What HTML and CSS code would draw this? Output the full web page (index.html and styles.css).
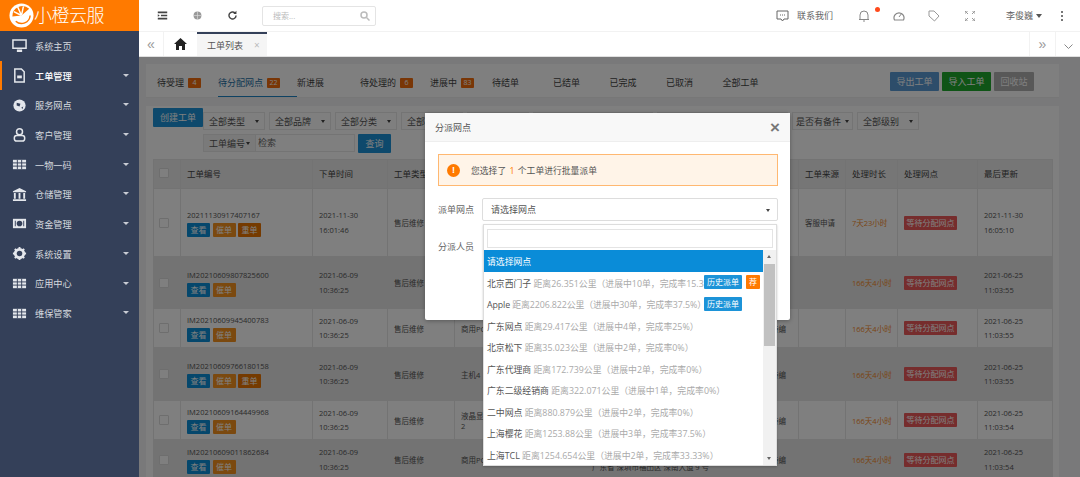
FILE: index.html
```html
<!DOCTYPE html>
<html>
<head>
  <meta charset="utf-8">
  <title>工单列表</title>
  <link rel="stylesheet" href="styles.css">
</head>
<body>
  <div class="app">
    <aside class="sidebar">
      <div class="logo">
        <svg class="logo-mark" width="25" height="25" viewBox="0 0 26 26"><circle cx="13" cy="13" r="12.500" fill="#fff"/><path d="M13 13 L21 6 A10.500 10.500 0 0 0 3.500 14 Z" fill="#ff7a00"/><path d="M13 13 L5 9 M13 13 L9 4 M13 13 L15 3.500" stroke="#fff" stroke-width="1.500"/><path d="M7 19 A9 9 0 0 0 22 13" fill="none" stroke="#ff7a00" stroke-width="1.500"/></svg>
        <span class="logo-text">小橙云服</span>
      </div>
      <nav class="menu">
        <a class="menu-item">
          <svg class="menu-icon" viewBox="0 0 16 16"><path d="M1 2h14v9H1z M6 13h4v1H6z" fill="none" stroke="#e4e7ec" stroke-width="1.600"/></svg>
          <span>系统主页</span>
        </a>
        <a class="menu-item active">
          <svg class="menu-icon" viewBox="0 0 16 16"><path d="M3 1h7l3 3v11H3z" fill="none" stroke="#e4e7ec" stroke-width="1.600"/><path d="M5.500 8h5v3h-5z" fill="#e4e7ec"/></svg>
          <span>工单管理</span><i class="caret"></i>
        </a>
        <a class="menu-item">
          <svg class="menu-icon" viewBox="0 0 16 16"><circle cx="8" cy="8" r="6.500" fill="#e4e7ec"/><path d="M5 5l4 1-1 3-3-1z M10 10l2-1-1 3z" fill="#344059"/></svg>
          <span>服务网点</span><i class="caret"></i>
        </a>
        <a class="menu-item">
          <svg class="menu-icon" viewBox="0 0 16 16"><circle cx="8" cy="5" r="3.200" fill="none" stroke="#e4e7ec" stroke-width="1.600"/><rect x="2.500" y="9" width="11" height="6" rx="2.500" fill="none" stroke="#e4e7ec" stroke-width="1.600"/></svg>
          <span>客户管理</span><i class="caret"></i>
        </a>
        <a class="menu-item">
          <svg class="menu-icon" viewBox="0 0 16 16"><path d="M1 3h14v10H1z" fill="#e4e7ec"/><path d="M1 6.300h14M1 9.700h14M5.700 3v10M10.300 3v10" stroke="#344059"/></svg>
          <span>一物一码</span><i class="caret"></i>
        </a>
        <a class="menu-item">
          <svg class="menu-icon" viewBox="0 0 16 16"><path d="M8 1l7 3.500v1H1v-1z M2 6.500h2v6H2z M7 6.500h2v6H7z M12 6.500h2v6h-2z M1 13h14v2H1z" fill="#e4e7ec"/></svg>
          <span>仓储管理</span><i class="caret"></i>
        </a>
        <a class="menu-item">
          <svg class="menu-icon" viewBox="0 0 16 16"><path d="M1 3h14v10H1z" fill="#e4e7ec"/><circle cx="8" cy="8" r="3" fill="#344059"/><path d="M3 5h1v6H3z M12 5h1v6h-1z" fill="#344059"/></svg>
          <span>资金管理</span><i class="caret"></i>
        </a>
        <a class="menu-item">
          <svg class="menu-icon" viewBox="0 0 16 16"><circle cx="8" cy="8" r="4.500" fill="none" stroke="#e4e7ec" stroke-width="3"/><path d="M8 1v3M8 12v3M1 8h3M12 8h3M3 3l2 2M11 11l2 2M13 3l-2 2M5 11l-2 2" stroke="#e4e7ec" stroke-width="2"/></svg>
          <span>系统设置</span><i class="caret"></i>
        </a>
        <a class="menu-item">
          <svg class="menu-icon" viewBox="0 0 16 16"><path d="M1 3h14v10H1z" fill="#e4e7ec"/><path d="M1 6.300h14M1 9.700h14M5.700 3v10M10.300 3v10" stroke="#344059"/></svg>
          <span>应用中心</span><i class="caret"></i>
        </a>
        <a class="menu-item">
          <svg class="menu-icon" viewBox="0 0 16 16"><path d="M1 3h14v10H1z" fill="#e4e7ec"/><path d="M1 6.300h14M1 9.700h14M5.700 3v10M10.300 3v10" stroke="#344059"/></svg>
          <span>维保管家</span><i class="caret"></i>
        </a>
      </nav>
    </aside>

    <div class="main">
      <header class="topbar">
        <div class="top-left">
          <svg class="top-icon" viewBox="0 0 14 14"><path d="M1 2h12v2H1z M5 6h8v2H5z M1 10h12v2H1z M1 5.500l2.500 1.500L1 8.500z" fill="#444"/></svg>
          <svg class="top-icon" viewBox="0 0 14 14"><circle cx="7" cy="7" r="5" fill="#999"/><path d="M2 7h10M7 2v10" stroke="#ddd" stroke-width=".8"/></svg>
          <svg class="top-icon" viewBox="0 0 14 14"><path d="M11.500 7a4.500 4.500 0 1 1-1.300-3.200" fill="none" stroke="#444" stroke-width="1.800"/><path d="M12 1v4H8z" fill="#444"/></svg>
          <div class="search"><span>搜索...</span>
            <svg width="10" height="10" viewBox="0 0 10 10"><circle cx="4" cy="4" r="3" fill="none" stroke="#bbb" stroke-width="1.500"/><path d="M6.500 6.500L9.500 9.500" stroke="#bbb" stroke-width="1.500"/></svg>
          </div>
        </div>
        <div class="top-right">
          <svg class="contact-icon" width="13" height="12" viewBox="0 0 13 12"><path d="M1 1h11v8H8l-1.500 2L5 9H1z" fill="none" stroke="#666"/><path d="M4 5h1M6 5h1M8 5h1" stroke="#666"/></svg>
          <span class="contact">联系我们</span>
          <span class="bell">
            <svg width="10" height="12" viewBox="0 0 10 12"><path d="M1 9.500V5a4 4 0 0 1 8 0v4.500z M0 9.500h10 M4 11h2" fill="none" stroke="#888"/></svg>
            <i class="dot"></i>
          </span>
          <svg class="right-icon skin" width="12" height="12" viewBox="0 0 12 12"><path d="M1.500 10a5 5 0 1 1 9 0z" fill="none" stroke="#888" stroke-width="1.200"/><path d="M6 7l3-4" stroke="#888"/></svg>
          <svg class="right-icon tag" width="12" height="12" viewBox="0 0 12 12"><path d="M1 1h5l5 5-4.500 5L1 6z" fill="none" stroke="#999"/></svg>
          <svg class="right-icon full" width="10" height="10" viewBox="0 0 10 10"><path d="M0 3V0h3M7 0h3v3M10 7v3H7M3 10H0V7M0 0l3 3M10 0L7 3M10 10L7 7M0 10l3-3" fill="none" stroke="#999"/></svg>
          <span class="user">李俊巍</span><i class="user-caret"></i>
          <span class="more"><i></i><i></i><i></i></span>
        </div>
      </header>

      <div class="tabsbar">
        <button class="tab-arrow">«</button>
        <span class="tab-home">
          <svg width="13" height="12" viewBox="0 0 13 12"><path d="M6.500 0L13 6h-2v6H8V8H5v4H2V6H0z" fill="#222"/></svg>
        </span>
        <span class="tab-current">工单列表<em>×</em></span>
        <span class="tab-spacer"></span>
        <button class="tab-arrow right">»</button>
        <button class="tab-arrow right down"><svg width="9" height="5" viewBox="0 0 9 5"><path d="M.5.500l4 4 4-4" fill="none" stroke="#888"/></svg></button>
      </div>

      <div class="content">
        <section class="status-bar">
          <div class="status-tabs">
            <a class="s-tab w-a">待受理<b>4</b></a>
            <a class="s-tab w-b current">待分配网点<b>22</b></a>
            <a class="s-tab w-c">新进展</a>
            <a class="s-tab w-d">待处理的<b>6</b></a>
            <a class="s-tab w-e">进展中<b>83</b></a>
            <a class="s-tab w-f">待结单</a>
            <a class="s-tab w-g">已结单</a>
            <a class="s-tab w-g">已完成</a>
            <a class="s-tab w-g">已取消</a>
            <a class="s-tab">全部工单</a>
          </div>
          <div class="status-actions">
            <button class="btn btn-export">导出工单</button>
            <button class="btn btn-import">导入工单</button>
            <button class="btn btn-trash">回收站</button>
          </div>
        </section>

        <section class="list-panel">
          <div class="filters">
            <button class="btn btn-create">创建工单</button>
            <div class="filter-rows">
              <div class="filter-row">
                <span class="pick p-type">全部类型<i></i></span>
                <span class="pick p-type">全部品牌<i></i></span>
                <span class="pick p-type">全部分类<i></i></span>
                <span class="pick p-type">全部来源<i></i></span>
                <span class="pick p-type"></span>
                <span class="pick p-wide"></span>
                <span class="pick p-wide2"></span>
                <span class="pick p-spare">是否有备件<i></i></span>
                <span class="pick p-level">全部级别<i></i></span>
              </div>
              <div class="filter-row second">
                <div class="search-group">
                  <span class="pick p-code">工单编号<i></i></span>
                  <span class="search-input">检索</span>
                </div>
                <button class="btn btn-query">查询</button>
              </div>
            </div>
          </div>

          <table class="orders">
            <colgroup>
              <col class="c-check"><col class="c-no"><col class="c-time"><col class="c-type"><col class="c-prod"><col class="c-cust"><col class="c-addr"><col class="c-state"><col class="c-src"><col class="c-dur"><col class="c-site"><col class="c-upd">
            </colgroup>
            <thead>
              <tr><th><i class="check"></i></th><th>工单编号</th><th>下单时间</th><th>工单类型</th><th></th><th></th><th></th><th></th><th>工单来源</th><th>处理时长</th><th>处理网点</th><th>最后更新</th></tr>
            </thead>
            <tbody>
              <tr class="r1">
                <td><i class="check"></i></td>
                <td><div class="no">20211130917407167</div><div class="acts"><span class="view">查看</span><span class="urge">催单</span><span class="redo">重单</span></div></td>
                <td class="dt">2021-11-30<br>16:01:46</td><td>售后维修</td><td></td><td></td><td></td><td></td><td>客服申请</td><td class="dur">7天23小时</td><td><span class="wait">等待分配网点</span></td><td class="dt">2021-11-30<br>16:05:10</td>
              </tr>
              <tr class="r2">
                <td><i class="check"></i></td>
                <td><div class="no">IM20210609807825600</div><div class="acts"><span class="view">查看</span><span class="urge">催单</span></div></td>
                <td class="dt">2021-06-09<br>10:36:25</td><td>售后维修</td><td></td><td></td><td></td><td></td><td></td><td class="dur">166天4小时</td><td><span class="wait">等待分配网点</span></td><td class="dt">2021-06-25<br>11:03:55</td>
              </tr>
              <tr class="r3">
                <td><i class="check"></i></td>
                <td><div class="no">IM20210609945400783</div><div class="acts"><span class="view">查看</span><span class="urge">催单</span></div></td>
                <td class="dt">2021-06-09<br>10:36:25</td><td>售后维修</td><td>商用PC</td><td></td><td></td><td class="edit">待编</td><td></td><td class="dur">166天4小时</td><td><span class="wait">等待分配网点</span></td><td class="dt">2021-06-25<br>11:03:55</td>
              </tr>
              <tr class="r4">
                <td><i class="check"></i></td>
                <td><div class="no">IM20210609766180158</div><div class="acts"><span class="view">查看</span><span class="urge">催单</span><span class="redo">重单</span></div></td>
                <td class="dt">2021-06-09<br>10:36:25</td><td>售后维修</td><td>主机4</td><td></td><td></td><td class="edit">待编</td><td></td><td class="dur">166天4小时</td><td><span class="wait">等待分配网点</span></td><td class="dt">2021-06-25<br>11:03:55</td>
              </tr>
              <tr class="r5">
                <td><i class="check"></i></td>
                <td><div class="no">IM20210609164449968</div><div class="acts"><span class="view">查看</span><span class="urge">催单</span></div></td>
                <td class="dt">2021-06-09<br>10:36:25</td><td>售后维修</td><td>液晶显<br>2</td><td></td><td></td><td class="edit">待编</td><td></td><td class="dur">166天4小时</td><td><span class="wait">等待分配网点</span></td><td class="dt">2021-06-25<br>11:03:54</td>
              </tr>
              <tr class="r6">
                <td><i class="check"></i></td>
                <td><div class="no">IM20210609011862684</div><div class="acts"><span class="view">查看</span><span class="urge">催单</span></div></td>
                <td class="dt">2021-06-09<br>10:36:25</td><td>售后维修</td><td>商用PC</td><td></td><td class="dt">&nbsp;<br>广东省 深圳市福田区 深南大道 9 号</td><td class="edit">待编</td><td></td><td class="dur">166天4小时</td><td><span class="wait">等待分配网点</span></td><td class="dt">2021-06-25<br>11:03:54</td>
              </tr>
            </tbody>
          </table>
        </section>

        <div class="backdrop"></div>
      </div>
    </div>
  </div>

  <div class="modal">
    <div class="modal-head"><span>分派网点</span><em>×</em></div>
    <div class="modal-body">
      <div class="notice"><i>!</i><span>您选择了 <b>1</b> 个工单进行批量派单</span></div>
      <div class="field"><label>派单网点</label><div class="select">请选择网点<i></i></div></div>
      <div class="field person"><label>分派人员</label></div>
    </div>
  </div>

  <div class="dropdown">
    <div class="dd-search"><span></span></div>
    <div class="dd-wrap">
      <ul class="dd-list">
        <li class="picked">请选择网点</li>
        <li><b>北京西门子</b> 距离26.351公里（进展中10单，完成率15.3<span class="tags"><span class="hist">历史派单</span><span class="rec">荐</span></span></li>
        <li class="tight"><b>Apple</b> 距离2206.822公里（进展中30单，完成率37.5%）<span class="tags one"><span class="hist">历史派单</span></span></li>
        <li><b>广东网点</b> 距离29.417公里（进展中4单，完成率25%）</li>
        <li><b>北京松下</b> 距离35.023公里（进展中2单，完成率0%）</li>
        <li><b>广东代理商</b> 距离172.739公里（进展中2单，完成率0%）</li>
        <li><b>广东二级经销商</b> 距离322.071公里（进展中1单，完成率0%）</li>
        <li><b>二中网点</b> 距离880.879公里（进展中2单，完成率0%）</li>
        <li><b>上海樱花</b> 距离1253.88公里（进展中3单，完成率37.5%）</li>
        <li><b>上海TCL</b> 距离1254.654公里（进展中2单，完成率33.33%）</li>
      </ul>
      <div class="scroll"><i class="up"></i><span class="thumb"></span><i class="down"></i></div>
    </div>
  </div>
</body>
</html>
```

FILE: styles.css
```css
* {
  box-sizing: border-box;
}

html, body {
  height: 100%;
}

body {
  margin: 0;
  overflow: hidden;
  background: #fff;
  color: #666;
  font-family: "Open Sans", "Noto Sans CJK SC", sans-serif;
  font-size: 9px;
}

.app {
  display: flex;
  height: 477px;
}

/* sidebar */
.sidebar {
  width: 139px;
  flex: none;
  background: #344059;
}

.logo {
  display: flex;
  align-items: center;
  height: 31px;
  padding-left: 9px;
  background: #ff7a00;
  color: #fff;
}

.logo-text {
  font-size: 18px;
  font-weight: 300;
  letter-spacing: -0.5px;
  line-height: 31px;
}

.menu {
  display: flex;
  flex-direction: column;
}

.menu-item {
  position: relative;
  display: flex;
  align-items: center;
  height: 29.700px;
  padding-left: 12px;
  color: #d5d8de;
  font-size: 9.200px;
}

.menu-item.active {
  color: #fff;
  font-weight: 500;
}

.menu-item.active::before {
  content: '';
  position: absolute;
  left: 0;
  top: 0;
  bottom: 0;
  width: 2px;
  background: #ff7a00;
}

.menu-icon {
  width: 15px;
  height: 15px;
  margin-right: 8px;
  flex: none;
}

.caret {
  position: absolute;
  right: 10px;
  top: 13px;
  border: 3.500px solid transparent;
  border-top: 3.500px solid #c8ccd4;
  border-bottom: 0;
}

/* top bar */
.main {
  position: relative;
  flex: 1;
  min-width: 0;
  display: flex;
  flex-direction: column;
}

.topbar {
  display: flex;
  justify-content: space-between;
  align-items: center;
  height: 32px;
  border-bottom: 1px solid #f2f2f2;
}

.top-left {
  display: flex;
  align-items: center;
  padding-left: 18px;
}

.top-icon {
  width: 11px;
  height: 11px;
  margin-right: 24px;
}

.search {
  display: flex;
  justify-content: space-between;
  align-items: center;
  width: 114px;
  height: 20px;
  padding: 0 5px 0 10px;
  border: 1px solid #e4e4e4;
  border-radius: 2px;
  color: #bbb;
  font-size: 8px;
}

.top-right {
  display: flex;
  align-items: center;
  padding-right: 17px;
}

.contact {
  margin-left: 8px;
  margin-right: 26px;
  color: #666;
}

.bell {
  position: relative;
  display: flex;
  margin-right: 24px;
}

.dot {
  position: absolute;
  right: -11px;
  top: -3px;
  width: 5px;
  height: 5px;
  border-radius: 50%;
  background: #ff4a1c;
}

.skin {
  margin-right: 23px;
}

.tag {
  margin-right: 25px;
}

.full {
  margin-right: 31px;
}

.user {
  color: #666;
}

.user-caret {
  margin-left: 3px;
  border: 3.500px solid transparent;
  border-top: 4px solid #555;
  border-bottom: 0;
}

.more {
  display: flex;
  flex-direction: column;
  gap: 2px;
  margin-left: 19px;
}

.more i {
  width: 2px;
  height: 2px;
  background: #777;
}

/* tab row */
.tabsbar {
  display: flex;
  align-items: stretch;
  height: 25px;
  border-bottom: 1px solid #e0e0e0;
  background: #fff;
}

.tab-arrow {
  width: 25px;
  padding: 0;
  border: 0;
  border-right: 1px solid #f2f2f2;
  background: #fff;
  color: #999;
  font: 14px/20px "Liberation Sans", sans-serif;
}

.tab-arrow.right {
  width: 26px;
  border-right: 0;
  border-left: 1px solid #f2f2f2;
}

.tab-arrow.down {
  width: 25px;
}

.tab-home {
  display: flex;
  align-items: center;
  justify-content: center;
  width: 33px;
}

.tab-current {
  display: flex;
  align-items: center;
  width: 70px;
  padding-left: 10px;
  border-top: 2px solid #344059;
  background: #f5f5f5;
  color: #555;
  font-size: 9px;
}

.tab-current em {
  margin-left: 11px;
  color: #bbb;
  font-style: normal;
  font-size: 10px;
}

.tab-spacer {
  flex: 1;
}

/* page content under the backdrop */
.content {
  position: relative;
  flex: 1;
  min-height: 0;
  overflow: hidden;
  padding: 7px 21px 0 7px;
  background: #f3f3f4;
}

.backdrop {
  position: absolute;
  inset: 0;
  background: rgba(0, 0, 0, 0.5);
}

.status-bar {
  display: flex;
  justify-content: space-between;
  align-items: center;
  height: 34px;
  margin-bottom: 8px;
  padding-right: 25px;
  background: #fff;
  border-bottom: 1px solid #eee;
}

.status-tabs {
  display: flex;
  align-items: stretch;
  height: 33px;
  padding-left: 11px;
}

.s-tab {
  position: relative;
  display: flex;
  align-items: center;
  padding-top: 4px;
  color: #444;
  font-size: 9px;
  white-space: nowrap;
}

.s-tab b {
  min-width: 13px;
  margin-left: 4px;
  padding: 0 2px;
  border-radius: 1px;
  background: #f26c0d;
  color: #fff;
  font-size: 7px;
  font-weight: 400;
  line-height: 10px;
  text-align: center;
}

.s-tab.current {
  color: #1c6ea4;
}

.s-tab.current::after {
  content: '';
  position: absolute;
  left: 0;
  right: 0;
  bottom: 0;
  height: 1px;
  background: #1c84c6;
}

.w-a { width: 61px; }
.w-b { width: 79px; }
.w-c { width: 63px; }
.w-d { width: 70px; }
.w-e { width: 62px; }
.w-f { width: 61px; }
.w-g { width: 56.500px; }

.status-actions {
  display: flex;
  gap: 3px;
  margin-top: 2px;
}

.btn {
  height: 19px;
  padding: 0;
  border: 0;
  border-radius: 1px;
  color: #fff;
  font: 9px/19px "Open Sans", "Noto Sans CJK SC", sans-serif;
}

.btn-export { width: 49px; background: #5b9bd5; }
.btn-import { width: 49px; background: #1ea82d; }
.btn-trash { width: 40px; background: #b0b0b0; }
.btn-create { width: 50px; background: #1c93d8; flex: none; }
.btn-query { width: 33px; background: #1c93d8; }

.list-panel {
  padding: 2px 0 0 7px;
  background: #fff;
}

.filters {
  display: flex;
  height: 44px;
  padding-right: 7px;
}

.filter-rows {
  display: flex;
  flex-direction: column;
  gap: 4px;
  padding-top: 4px;
}

.filter-row {
  display: flex;
  gap: 4px;
}

.pick {
  display: flex;
  justify-content: space-between;
  align-items: center;
  height: 18px;
  padding: 0 5px;
  border: 1px solid #e8e8e8;
  color: #555;
  font-size: 9px;
  white-space: nowrap;
}

.pick i {
  border: 2.500px solid transparent;
  border-top: 3px solid #444;
  border-bottom: 0;
}

.p-type { width: 62px; }
.p-wide { width: 120px; }
.p-wide2 { width: 131px; }
.p-spare { width: 61px; padding: 0 3px; }
.p-level { width: 62px; }

.second {
  gap: 3px;
}

.search-group {
  display: flex;
  width: 152px;
  height: 18px;
  border: 1px solid #e8e8e8;
}

.p-code {
  width: 52px;
  height: 16px;
  border: 0;
  border-right: 1px solid #e8e8e8;
  background: #f5f5f5;
}

.search-input {
  padding-left: 2px;
  color: #666;
  font-size: 9px;
  line-height: 16px;
}

.orders {
  width: 899px;
  margin-top: 7px;
  border-collapse: collapse;
  table-layout: fixed;
  color: #555;
  font-size: 7.500px;
}

.c-check { width: 27px; }
.c-no { width: 132px; }
.c-time { width: 75px; }
.c-type { width: 67px; }
.c-prod { width: 53px; }
.c-cust { width: 78px; }
.c-addr { width: 160px; }
.c-state { width: 53px; }
.c-src { width: 47px; }
.c-dur { width: 52px; }
.c-site { width: 80px; }
.c-upd { width: 75px; }

.orders th,
.orders td {
  padding: 0 0 0 6px;
  border: 1px solid #e6e6e6;
  text-align: left;
  vertical-align: middle;
  white-space: nowrap;
}

.orders th {
  height: 29px;
  padding-bottom: 2px;
  background: #ececec;
  color: #444;
  font-size: 8.500px;
  font-weight: 400;
}

.orders th:first-child,
.orders td:first-child {
  padding-left: 5px;
}

.orders tbody tr:nth-child(odd) {
  background: #fff;
}

.orders tbody tr:nth-child(even) {
  background: #e6e6e6;
}

.r1 { height: 68px; }
.r2 { height: 52px; }
.r3 { height: 39px; }
.r4 { height: 53px; }
.r5 { height: 39px; }
.r6 { height: 40px; }

.check {
  display: block;
  width: 10px;
  height: 10px;
  border: 1px solid #ddd;
  border-radius: 1px;
  background: #fff;
}

.no {
  margin-bottom: 2px;
  line-height: 12px;
}

.acts {
  display: flex;
  gap: 2.500px;
}

.acts span {
  width: 23px;
  height: 14px;
  border-radius: 1px;
  color: #fff;
  font-size: 8px;
  line-height: 14px;
  text-align: center;
}

.view { background: #0b8fd8; }
.urge { background: #f7931e; }
.redo { background: #ea7500; }

.dt {
  line-height: 14.500px;
}

.orders td.edit {
  padding-right: 12px;
  text-align: right;
}

.dur {
  color: #f58a1f;
}

.wait {
  display: block;
  width: 53px;
  height: 14px;
  border-radius: 1px;
  background: #ed5a5a;
  color: #fff;
  font-size: 8px;
  line-height: 14px;
  text-align: center;
}

/* dialog */
.modal {
  position: absolute;
  left: 425px;
  top: 113px;
  width: 365px;
  height: 207px;
  border-radius: 2px;
  background: #fff;
  box-shadow: 0 1px 4px rgba(0, 0, 0, 0.3);
}

.modal-head {
  display: flex;
  justify-content: space-between;
  align-items: center;
  height: 29px;
  padding: 0 10px;
  border-bottom: 1px solid #eee;
  background: #f8f8f8;
  color: #555;
  font-size: 9px;
}

.modal-head em {
  color: #777;
  font: 700 17px/17px "Liberation Sans", sans-serif;
  font-style: normal;
}

.modal-body {
  padding: 12px 12px 0 13px;
}

.notice {
  display: flex;
  align-items: center;
  height: 32px;
  padding-left: 8px;
  border: 1px solid #ffb871;
  background: #fff4e8;
  color: #555;
  font-size: 8.800px;
}

.notice i {
  width: 13px;
  height: 13px;
  margin-right: 11px;
  border-radius: 50%;
  background: #ff7a00;
  color: #fff;
  font: 700 9px/13px "Liberation Sans", sans-serif;
  text-align: center;
}

.notice b {
  margin: 0 1px;
  color: #ff7a00;
  font-weight: 400;
}

.field {
  display: flex;
  align-items: center;
  margin-top: 12px;
}

.field label {
  width: 44px;
  color: #666;
  font-size: 9px;
}

.select {
  position: relative;
  width: 296px;
  height: 23px;
  padding-left: 8px;
  border: 1px solid #ddd;
  border-radius: 2px;
  color: #555;
  font-size: 9px;
  line-height: 21px;
}

.select i {
  position: absolute;
  right: 7px;
  top: 10px;
  border: 2.500px solid transparent;
  border-top: 3px solid #444;
  border-bottom: 0;
}

.field.person {
  margin-top: 19px;
}

.dropdown {
  position: absolute;
  left: 483px;
  top: 224px;
  width: 294px;
  height: 242px;
  background: #fff;
  border: 1px solid #ddd;
  box-shadow: 0 1px 2px rgba(0, 0, 0, 0.2);
}

.dd-search {
  height: 25px;
  padding: 4px 3px 0 3px;
}

.dd-search span {
  display: block;
  height: 19px;
  border: 1px solid #e4e4e4;
}

.dd-wrap {
  display: flex;
  height: 215px;
}

.dd-list {
  flex: 1;
  min-width: 0;
  margin: 0;
  padding: 0;
  overflow: hidden;
  list-style: none;
}

.dd-list li {
  position: relative;
  height: 21.500px;
  padding-left: 3px;
  overflow: hidden;
  color: #aaa;
  font-size: 8.850px;
  line-height: 25px;
  white-space: nowrap;
}

.dd-list li.tight {
  letter-spacing: -0.1px;
}

.dd-list li b {
  color: #555;
  font-weight: 400;
}

.dd-list li.picked {
  background: #0a8cd8;
  color: #fff;
}

.tags {
  position: absolute;
  right: 3px;
  top: 3.500px;
  display: flex;
  gap: 4px;
  letter-spacing: 0;
}

.tags.one {
  right: 21px;
}

.hist {
  width: 38px;
  height: 14px;
  border-radius: 1px;
  background: #1c93d8;
  color: #fff;
  font-size: 8px;
  line-height: 14px;
  text-align: center;
}

.rec {
  width: 14px;
  height: 14px;
  border-radius: 1px;
  background: #ff7a00;
  color: #fff;
  font-size: 8px;
  line-height: 14px;
  text-align: center;
}

.scroll {
  position: relative;
  width: 13px;
  flex: none;
  background: #f1f1f1;
}

.thumb {
  position: absolute;
  left: 1px;
  right: 1px;
  top: 14px;
  height: 82px;
  background: #c1c1c1;
}

.scroll .up,
.scroll .down {
  position: absolute;
  left: 4px;
  border: 2.500px solid transparent;
}

.scroll .up {
  top: 5px;
  border-bottom: 3px solid #666;
  border-top: 0;
}

.scroll .down {
  bottom: 5px;
  border-top: 3px solid #666;
  border-bottom: 0;
}
```
